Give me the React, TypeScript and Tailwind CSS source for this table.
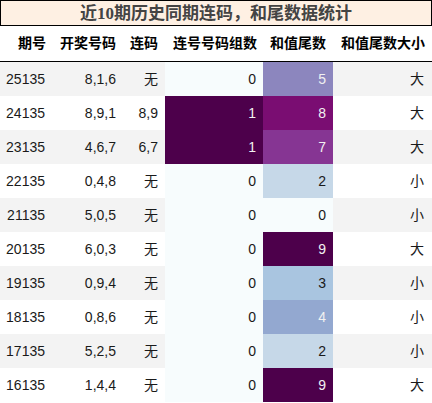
import React from "react";

const rows = [
  ["25135", "8,1,6", "无", 0, 5, "大"],
  ["24135", "8,9,1", "8,9", 1, 8, "大"],
  ["23135", "4,6,7", "6,7", 1, 7, "大"],
  ["22135", "0,4,8", "无", 0, 2, "小"],
  ["21135", "5,0,5", "无", 0, 0, "小"],
  ["20135", "6,0,3", "无", 0, 9, "大"],
  ["19135", "0,9,4", "无", 0, 3, "小"],
  ["18135", "0,8,6", "无", 0, 4, "小"],
  ["17135", "5,2,5", "无", 0, 2, "小"],
  ["16135", "1,4,4", "无", 0, 9, "大"],
] as const;

const sumBg: Record<number, string> = {
  0: "bg-[#f7fcfd] text-[#1a1a1a]",
  2: "bg-[#c6d8e8] text-[#1a1a1a]",
  3: "bg-[#a9c5e0] text-[#1a1a1a]",
  4: "bg-[#93a8d0] text-[#f1f1f1]",
  5: "bg-[#8c86be] text-[#f1f1f1]",
  7: "bg-[#863593] text-[#f1f1f1]",
  8: "bg-[#7a0d72] text-[#f1f1f1]",
  9: "bg-[#4d004b] text-[#f1f1f1]",
};

const cols = "grid grid-cols-[53px_70px_42px_98px_70px_99px]";

export default function App() {
  return (
    <div
      className="w-[432px] h-[403px] bg-white overflow-hidden"
      style={{ fontFamily: '"Liberation Sans", "Noto Sans CJK SC", sans-serif' }}
    >
      <div className="h-[26px] border border-black bg-[#fef0e3] flex items-center justify-center">
        <span
          className="text-[17px] font-bold text-[#444] leading-none"
          style={{ fontFamily: '"Liberation Serif", "Noto Sans CJK SC", serif' }}
        >
          近10期历史同期连码，和尾数据统计
        </span>
      </div>
      <div className={`${cols} h-[36px] border-b border-black text-[14px] font-bold text-black items-center text-right`}>
        <div className="pr-[7px]">期号</div>
        <div className="pr-[7px]">开奖号码</div>
        <div className="pr-[7px]">连码</div>
        <div className="pr-[6px]">连号号码组数</div>
        <div className="pr-[7px]">和值尾数</div>
        <div className="pr-[7px]">和值尾数大小</div>
      </div>
      {rows.map((r, i) => (
        <div
          key={i}
          className={`${cols} h-[34px] text-[14px] text-[#1a1a1a] text-right ${i % 2 === 0 ? "bg-[#f3f3f3]" : "bg-white"}`}
        >
          <div className="pr-[8px] flex items-center justify-end">{r[0]}</div>
          <div className="pr-[7px] flex items-center justify-end">{r[1]}</div>
          <div className="pr-[7px] flex items-center justify-end">{r[2]}</div>
          <div
            className={`pr-[7px] flex items-center justify-end ${r[3] === 1 ? "bg-[#4d004b] text-[#f1f1f1]" : "bg-[#f7fcfd] text-[#1a1a1a]"}`}
          >
            {r[3]}
          </div>
          <div className={`pr-[7px] flex items-center justify-end ${sumBg[r[4]]}`}>{r[4]}</div>
          <div className="pr-[8px] flex items-center justify-end">{r[5]}</div>
        </div>
      ))}
    </div>
  );
}
